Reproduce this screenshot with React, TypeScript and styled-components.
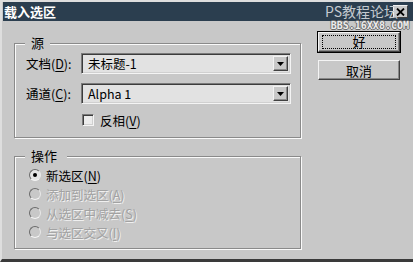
import React from "react";
import styled, { createGlobalStyle, css } from "styled-components";

const Global = createGlobalStyle`
  html, body { margin: 0; padding: 0; background: #c8c8c8; }
  body { font-family: "Noto Sans CJK SC", "Noto Sans", sans-serif; }
`;

const FONT = `"Noto Sans CJK SC", "Noto Sans", sans-serif`;

const Window = styled.div`
  position: relative;
  width: 413px;
  height: 262px;
  box-sizing: border-box;
  background: #c8c8c8;
  border-top: 2px solid #dedede;
  border-left: 2px solid #dedede;
  border-bottom: 3px solid #3a3a3a;
  display: flex;
  flex-direction: column;
  font-family: ${FONT};
  font-size: 13px;
  color: #000;
`;

const TitleBar = styled.div`
  height: 19px;
  margin-left: 1px;
  background: #2b3e4f;
  display: flex;
  align-items: center;
  padding: 0 5px 0 1px;
`;

const Title = styled.span`
  color: #fff;
  font-weight: bold;
  font-size: 13px;
  line-height: 19px;
`;

const CloseBtn = styled.div`
  margin-left: auto;
  width: 15px;
  height: 13px;
  background: #c8c8c8;
  border: 1px solid;
  border-color: #f0f0f0 #404040 #404040 #f0f0f0;
  box-sizing: border-box;
  display: flex;
  align-items: center;
  justify-content: center;
`;

const Body = styled.div`
  flex: 1;
  display: flex;
  align-items: flex-start;
  padding: 11px 0 0 12px;
`;

const Groups = styled.div`
  width: 287px;
  padding-top: 4px;
  display: flex;
  flex-direction: column;
  gap: 11px;
`;

const Group = styled.fieldset`
  margin: 0;
  padding: 0;
  min-width: 0;
  border: 1px solid #8a8a8a;
  box-shadow: 1px 1px 0 #fafafa, inset 1px 1px 0 #fafafa;
`;

const Legend = styled.legend<{ $pr: number }>`
  margin-left: 10px;
  padding: 0 ${(p) => p.$pr}px 0 6px;
  font-size: 13px;
  line-height: 14px;
  background: #c8c8c8;
`;

const Inner = styled.div<{ $pl: number; $pt: number; $pb: number; $gap: number }>`
  display: flex;
  flex-direction: column;
  padding: ${(p) => p.$pt}px 9px ${(p) => p.$pb}px ${(p) => p.$pl}px;
  gap: ${(p) => p.$gap}px;
`;

const FieldRow = styled.div`
  display: flex;
  align-items: center;
  height: 21px;
`;

const Label = styled.span`
  width: 55px;
  font-size: 12.5px;
  line-height: 21px;
  white-space: nowrap;
`;

const Key = styled.u`
  text-decoration: underline;
  text-underline-offset: 2px;
`;

const Select = styled.div`
  flex: 1;
  height: 21px;
  box-sizing: border-box;
  border: 1px solid;
  border-color: #7a7a7a #f4f4f4 #f4f4f4 #7a7a7a;
  box-shadow: inset 1px 1px 0 #3c3c3c, inset -1px -1px 0 #d0d0d0;
  background: #e2e2e2;
  display: flex;
  align-items: center;
  padding: 0 2px 0 6px;
`;

const SelectText = styled.span`
  flex: 1;
  font-size: 12.5px;
  line-height: 19px;
`;

const DropBtn = styled.div`
  width: 15px;
  height: 15px;
  box-sizing: border-box;
  background: #c8c8c8;
  border: 1px solid;
  border-color: #f2f2f2 #404040 #404040 #f2f2f2;
  box-shadow: inset -1px -1px 0 #8a8a8a;
  display: flex;
  align-items: center;
  justify-content: center;
`;

const CheckRow = styled.label`
  display: flex;
  align-items: center;
  gap: 6px;
  padding-left: 56px;
  height: 14px;
  font-size: 12.5px;
`;

const CheckBox = styled.span`
  width: 12px;
  height: 12px;
  box-sizing: border-box;
  border: 1px solid;
  border-color: #7a7a7a #f4f4f4 #f4f4f4 #7a7a7a;
  box-shadow: inset 1px 1px 0 #3c3c3c, inset -1px -1px 0 #d0d0d0;
  background: #ececec;
`;

const RadioRow = styled.div<{ $disabled?: boolean }>`
  display: flex;
  align-items: center;
  gap: 5px;
  height: 16px;
  font-size: 12.5px;
  ${(p) =>
    p.$disabled &&
    css`
      color: #a2a2a2;
      text-shadow: 1px 1px 0 #f0f0f0;
    `}
`;

const Radio = styled.span<{ $disabled?: boolean }>`
  width: 12px;
  height: 12px;
  box-sizing: border-box;
  border-radius: 50%;
  border: 1px solid;
  border-color: #6a6a6a #e8e8e8 #f4f4f4 #6a6a6a;
  background: ${(p) => (p.$disabled ? "#c8c8c8" : "#e6e6e6")};
  display: flex;
  align-items: center;
  justify-content: center;
`;

const Dot = styled.span`
  width: 4px;
  height: 4px;
  border-radius: 50%;
  background: #000;
`;

const Buttons = styled.div`
  margin-left: 17px;
  display: flex;
  flex-direction: column;
  gap: 8px;
  width: 82px;
`;

const Button = styled.div<{ $default?: boolean }>`
  height: 20px;
  box-sizing: border-box;
  background: #c8c8c8;
  display: flex;
  align-items: center;
  justify-content: center;
  font-size: 13px;
  border: 1px solid;
  border-color: #f4f4f4 #404040 #404040 #f4f4f4;
  box-shadow: inset -1px -1px 0 #888;
  ${(p) =>
    p.$default &&
    css`
      outline: 1px solid #000;
      outline-offset: 0;
    `}
`;

const Focus = styled.span`
  flex: 1;
  margin: 2px 3px;
  align-self: stretch;
  border: 1px dotted #000;
  display: flex;
  align-items: center;
  justify-content: center;
  line-height: 12px;
`;

const Watermark = styled.div`
  position: absolute;
  right: 4px;
  top: 0;
  display: flex;
  flex-direction: column;
  align-items: flex-end;
  pointer-events: none;
`;

const WmTop = styled.span`
  font-family: ${FONT};
  font-size: 14px;
  line-height: 18px;
  height: 19px;
  color: #c4cad0;
  margin-right: 11px;
`;

const WmBottom = styled.span`
  font-family: "DejaVu Sans Mono", monospace;
  font-size: 10px;
  font-weight: bold;
  line-height: 10px;
  color: #ececec;
  text-shadow: 1px 0 0 #6c6c6c, -1px 0 0 #6c6c6c, 0 1px 0 #6c6c6c, 0 -1px 0 #6c6c6c;
`;

const Arrow = () => (
  <svg width="7" height="4" viewBox="0 0 7 4">
    <path d="M0 0h7L3.5 4z" fill="#000" />
  </svg>
);

export default function App() {
  return (
    <>
      <Global />
      <Window>
        <TitleBar>
          <Title>载入选区</Title>
          <CloseBtn>
            <svg width="9" height="8" viewBox="0 0 9 8">
              <path d="M1 0.5L8 7.5M8 0.5L1 7.5" stroke="#000" strokeWidth="1.8" />
            </svg>
          </CloseBtn>
        </TitleBar>
        <Body>
          <Groups>
            <Group>
              <Legend $pr={6}>源</Legend>
              <Inner $pl={11} $pt={3} $pb={10} $gap={9}>
                <FieldRow>
                  <Label>
                    文档(<Key>D</Key>):
                  </Label>
                  <Select>
                    <SelectText>未标题-1</SelectText>
                    <DropBtn>
                      <Arrow />
                    </DropBtn>
                  </Select>
                </FieldRow>
                <FieldRow>
                  <Label>
                    通道(<Key>C</Key>):
                  </Label>
                  <Select>
                    <SelectText>Alpha 1</SelectText>
                    <DropBtn>
                      <Arrow />
                    </DropBtn>
                  </Select>
                </FieldRow>
                <CheckRow>
                  <CheckBox />
                  <span>
                    反相(<Key>V</Key>)
                  </span>
                </CheckRow>
              </Inner>
            </Group>
            <Group>
              <Legend $pr={10}>操作</Legend>
              <Inner $pl={14} $pt={4} $pb={8} $gap={3}>
                <RadioRow>
                  <Radio>
                    <Dot />
                  </Radio>
                  <span>
                    新选区(<Key>N</Key>)
                  </span>
                </RadioRow>
                <RadioRow $disabled>
                  <Radio $disabled />
                  <span>
                    添加到选区(<Key>A</Key>)
                  </span>
                </RadioRow>
                <RadioRow $disabled>
                  <Radio $disabled />
                  <span>
                    从选区中减去(<Key>S</Key>)
                  </span>
                </RadioRow>
                <RadioRow $disabled>
                  <Radio $disabled />
                  <span>
                    与选区交叉(<Key>I</Key>)
                  </span>
                </RadioRow>
              </Inner>
            </Group>
          </Groups>
          <Buttons>
            <Button $default>
              <Focus>好</Focus>
            </Button>
            <Button>取消</Button>
          </Buttons>
        </Body>
        <Watermark>
          <WmTop>PS教程论坛</WmTop>
          <WmBottom>BBS.16XX8.COM</WmBottom>
        </Watermark>
      </Window>
    </>
  );
}
